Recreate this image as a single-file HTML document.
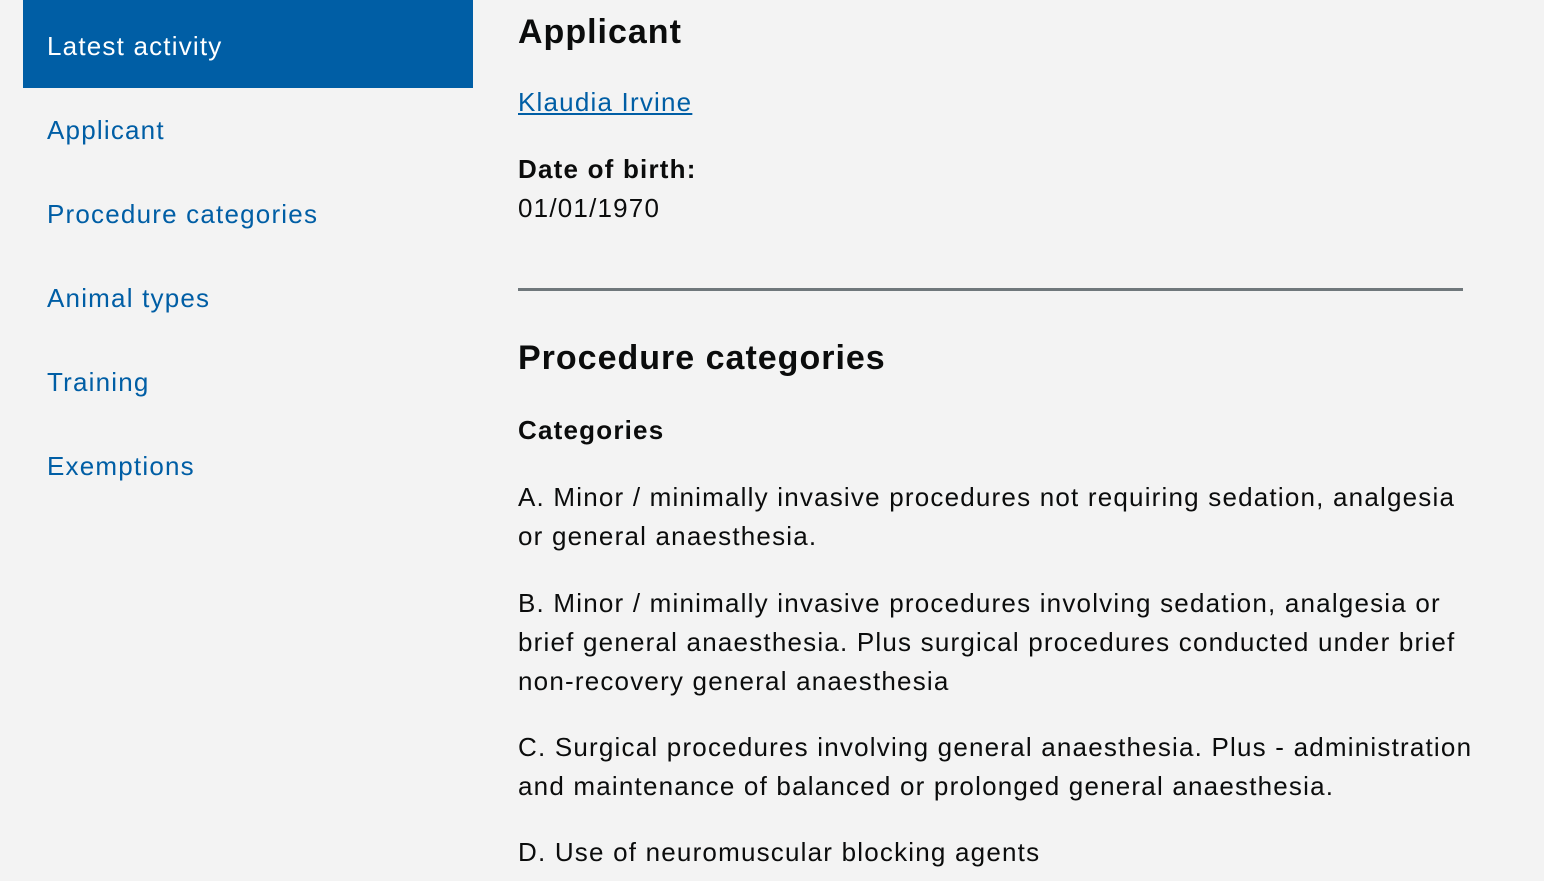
<!DOCTYPE html>
<html><head><meta charset="utf-8"><style>
body{margin:0;background:#f3f3f3;width:1544px;height:881px;overflow:hidden;font-family:"Liberation Sans",sans-serif;color:#0b0c0c;position:relative;letter-spacing:1.2px}
.nav{position:absolute;left:23px;top:0;width:450px}
.nav div{height:84px;line-height:84px;padding-left:24px;font-size:26px;color:#005ea5}
.nav div.act{background:#005ea5;color:#fff;height:88px;line-height:92px}
.main{position:absolute;left:518px;top:0;width:1000px}
.t{position:absolute;left:0;white-space:nowrap}
h2{margin:0;font-size:34px;font-weight:bold;letter-spacing:1px}
p{margin:0;font-size:26px;line-height:39px;white-space:nowrap}
a{color:#005ea5;text-decoration:underline;font-size:26px}
</style></head><body>
<div class="nav">
<div class="act">Latest activity</div>
<div>Applicant</div>
<div>Procedure categories</div>
<div>Animal types</div>
<div>Training</div>
<div>Exemptions</div>
</div>
<div class="main">
<h2 class="t" style="top:13px">Applicant</h2>
<a class="t" style="top:87px">Klaudia Irvine</a>
<p class="t" style="top:150px;font-weight:bold">Date of birth:</p>
<p class="t" style="top:189px">01/01/1970</p>
<div style="position:absolute;top:288px;left:0;width:945px;height:3px;background:#6f777b"></div>
<h2 class="t" style="top:339px">Procedure categories</h2>
<p class="t" style="top:411px;font-weight:bold">Categories</p>
<p style="position:absolute;top:478px">A. Minor / minimally invasive procedures not requiring sedation, analgesia<br>or general anaesthesia.</p>
<p style="position:absolute;top:584px">B. Minor / minimally invasive procedures involving sedation, analgesia or<br>brief general anaesthesia. Plus surgical procedures conducted under brief<br>non-recovery general anaesthesia</p>
<p style="position:absolute;top:728px">C. Surgical procedures involving general anaesthesia. Plus - administration<br>and maintenance of balanced or prolonged general anaesthesia.</p>
<p style="position:absolute;top:833px">D. Use of neuromuscular blocking agents</p>
</div>
</body></html>
